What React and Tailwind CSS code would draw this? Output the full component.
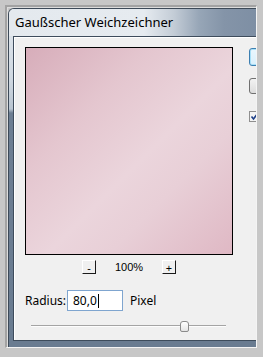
import React from "react";

const ui = { fontFamily: '"Noto Sans", "Liberation Sans", sans-serif' };

function SmallButton({ label }) {
  return (
    <div className="flex h-[14px] w-[14px] items-center justify-center border-t border-l border-r border-b border-t-white border-l-white border-r-[#1a1a1a] border-b-[#1a1a1a] bg-[#f0f0f0] text-[11px] leading-none text-black">
      {label}
    </div>
  );
}

export default function App() {
  return (
    <div className="h-[357px] w-[263px] bg-[#c7c7c7] pt-[5px] pl-[5px] pr-[6px] pb-[9px]" style={ui}>
      <div className="h-full border-t-2 border-l-2 border-r border-b border-t-[#a2a2a2] border-l-[#a2a2a2] border-r-[#f4f4f4] border-b-[#f4f4f4]">
        <div className="border-t border-l border-[#dcdcdc] h-full">
          {/* window */}
          <div className="flex h-full flex-col overflow-hidden rounded-tl-[6px] border-t border-l border-[#3d4a58] bg-[linear-gradient(180deg,#e2e8ee_0px,#cfd8e1_70px,#b9c5d1_100px,#6c7e93_104px,#6a7c91_100%)] pb-[6px]">
            {/* title bar */}
            <div className="flex h-[27px] shrink-0 items-center bg-[linear-gradient(90deg,#e4e9ee_0px,#e6ebf0_135px,#c3ccd6_165px,#97a6b7_190px,#8494a8_215px,#7e8fa4_100%)] pl-[6px]">
              <span className="text-[13px] leading-none text-black">Gaußscher Weichzeichner</span>
            </div>
            {/* content */}
            <div className="ml-[4px] flex flex-1 border-t border-l border-b border-[#3e4c5c]">
              <div className="flex flex-1 overflow-hidden border-t border-l border-white bg-[#f0f0f0]">
                <div className="flex w-[234px] shrink-0 flex-col pl-[10px] pt-[9px]">
                  <div className="h-[208px] w-[208px] border border-black bg-[linear-gradient(135deg,#d7adba_0%,#e4c6cf_30%,#ebd5dc_55%,#e8cfd7_70%,#dfb8c4_100%)]" />
                  <div className="mt-[5px] flex w-[208px] justify-center">
                    <SmallButton label="-" />
                    <div className="flex w-[66px] items-center justify-center text-[11px] leading-none text-black" style={{ fontFamily: '"Liberation Sans", sans-serif' }}>
                      100%
                    </div>
                    <SmallButton label="+" />
                  </div>
                  <div className="mt-[16px] flex items-center">
                    <span className="w-[42px] text-[12px] text-black">Radius:</span>
                    <div className="flex h-[21px] w-[56px] items-center border border-[#7fa5cf] bg-white pl-[5px] text-[12px] text-black">
                      80,0
                      <span className="ml-[1px] h-[14px] w-px bg-black" />
                    </div>
                    <span className="ml-[7px] text-[12px] text-black">Pixel</span>
                  </div>
                  <div className="relative mt-[10px] h-[12px] w-[208px]">
                    <div className="absolute left-[6px] top-[4px] h-[2px] w-[195px] border-t border-b border-t-[#a4a4a4] border-b-[#fdfdfd]" />
                    <div className="absolute left-[155px] top-0 h-[11px] w-[9px] rounded-t-[3px] rounded-b-[2px] border border-[#8b8b8b] bg-[linear-gradient(180deg,#ffffff,#e4e4e4)]" />
                  </div>
                </div>
                <div className="flex flex-col pt-[10px]">
                  <div className="h-[18px] w-[75px] rounded-[3px] border border-[#3c7fb1] bg-[linear-gradient(180deg,#eaf6fd,#d9f0fc)] shadow-[inset_0_0_0_1px_#a8e0f8]" />
                  <div className="mt-[12px] h-[16px] w-[75px] rounded-[3px] border border-[#707070] bg-[linear-gradient(180deg,#f2f2f2,#dcdcdc)]" />
                  <div className="mt-[17px] flex h-[11px] w-[11px] items-center justify-center border border-[#8f8f8f] bg-[#f4f4f4]">
                    <svg width="9" height="9" viewBox="0 0 9 9">
                      <path d="M1.5 4.5 L3.5 7 L7.5 1.5" stroke="#1d3f87" strokeWidth="1.6" fill="none" />
                    </svg>
                  </div>
                </div>
              </div>
            </div>
          </div>
        </div>
      </div>
    </div>
  );
}
